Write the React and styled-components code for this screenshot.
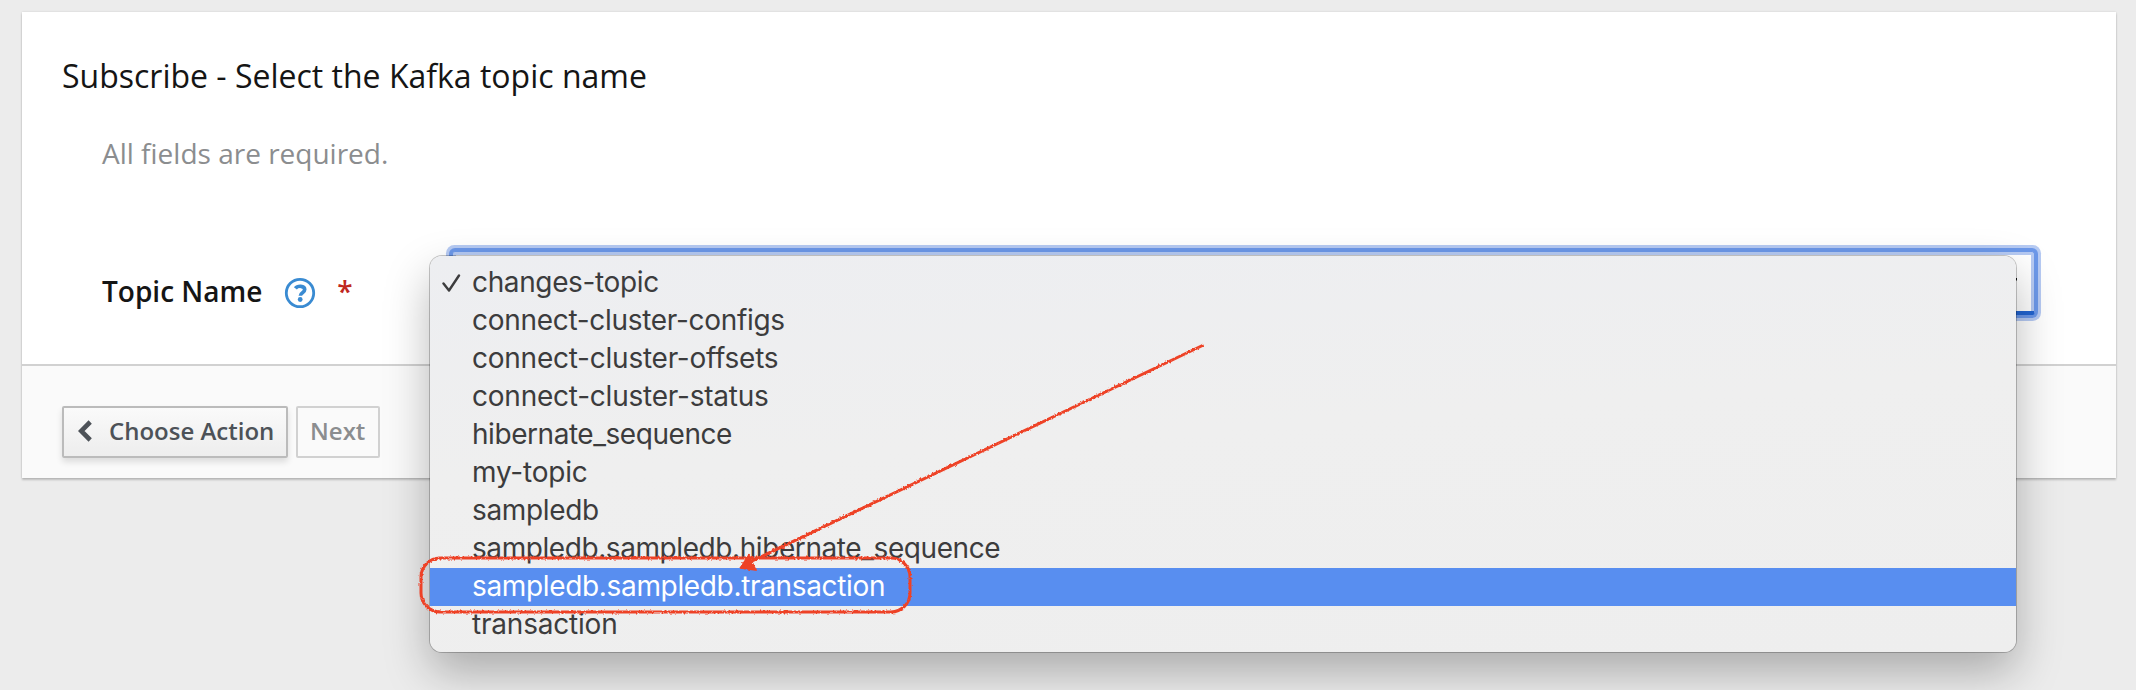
import React from "react";
import styled, { createGlobalStyle } from "styled-components";

const GlobalStyle = createGlobalStyle`
  * { box-sizing: border-box; }
  html, body { margin: 0; background: #ececec; }
  body { font-family: "Open Sans", "Noto Sans", sans-serif; color: #151515; overflow: hidden; }
`;

const Page = styled.main`
  position: relative;
  height: 690px;
  padding: 12px 20px 0 22px;
  overflow: hidden;
`;

const Card = styled.section`
  height: 466px;
  display: flex;
  flex-direction: column;
  background: #fff;
  box-shadow: 0 2px 2px rgba(3, 3, 3, 0.2), 0 0 2px rgba(3, 3, 3, 0.12);
`;

const CardBody = styled.div`
  height: 352px;
  padding: 39px 76px 0 40px;
`;

const Title = styled.h2`
  margin: 0;
  font-size: 32px;
  line-height: 50px;
  font-weight: 400;
  white-space: nowrap;
`;

const Hint = styled.p`
  margin: 29px 0 0 40px;
  font-size: 28px;
  line-height: 46px;
  color: #8b8d8f;
  white-space: nowrap;
`;

const Field = styled.div`
  display: flex;
  margin: 75px 0 0 40px;
`;

const FieldLabel = styled.label`
  display: flex;
  width: 350px;
  padding-top: 17px;
  font-size: 28px;
  line-height: 46px;
  font-weight: 600;
  white-space: nowrap;
`;

const HelpIcon = styled.svg`
  width: 32px;
  height: 32px;
  margin: 9px 0 0 22px;
`;

const Required = styled.span`
  margin-left: 21px;
  color: #c0281d;
`;

const Select = styled.div`
  display: flex;
  justify-content: flex-end;
  width: 1583px;
  height: 64px;
  padding: 26px 17px 0 0;
  border: 1px solid #6c98e9;
  border-bottom: 4px solid #2264d1;
  border-radius: 3px;
  background: #fff;
  box-shadow: inset 0 3px #b6caf3, inset 3px 0 #b6caf3, inset -3px 0 #b6caf3,
    0 0 0 3px #6c98e9, 0 0 0 6px #b6caf3;
`;

const CardFooter = styled.footer`
  flex: 1;
  display: flex;
  align-items: flex-start;
  gap: 8px;
  padding: 40px 40px 0;
  border-top: 2px solid #d1d1d1;
  background: #fafafa;
`;

const Button = styled.button`
  display: flex;
  align-items: center;
  width: ${(p) => p.$width}px;
  height: 52px;
  padding: 0 0 2px ${(p) => (p.disabled ? 12 : 14)}px;
  border: 2px solid ${(p) => (p.disabled ? "#d1d1d1" : "#bbbbbb")};
  border-radius: 2px;
  background: ${(p) => (p.disabled ? "#fafafa" : "linear-gradient(#fafafa, #ededed)")};
  box-shadow: ${(p) => (p.disabled ? "none" : "0 4px 6px rgba(3, 3, 3, 0.12)")};
  color: ${(p) => (p.disabled ? "#8b8d8f" : "#4d5258")};
  font: 600 24px/40px "Open Sans", "Noto Sans", sans-serif;
  white-space: nowrap;
`;

const ChevronIcon = styled.svg`
  width: 14px;
  height: 22px;
  margin-right: 17px;
`;

const Menu = styled.ul`
  position: absolute;
  left: 430px;
  top: 256px;
  width: 1586px;
  height: 396px;
  margin: 0;
  padding: 8px 0;
  list-style: none;
  border-radius: 12px;
  background: linear-gradient(176deg, #edeef1, #efefef 45%, #eeeeee);
  box-shadow: 0 0 0 1px rgba(0, 0, 0, 0.22), 0 20px 46px rgba(0, 0, 0, 0.28);
`;

const Option = styled.li`
  display: flex;
  align-items: center;
  height: 38px;
  padding-left: 12px;
  background: ${(p) => (p.$active ? "#588ef0" : "transparent")};
  color: ${(p) => (p.$active ? "#fff" : "#3c3c3d")};
  font: 400 28px/36px Inter, "Liberation Sans", sans-serif;
  white-space: nowrap;
`;

const OptionText = styled.span`
  height: 38px;
  letter-spacing: ${(p) => p.$tracking}px;
`;

const CheckSlot = styled.span`
  width: 30px;
  height: 38px;
`;

const Annotation = styled.svg`
  position: absolute;
  left: 0;
  top: 0;
  width: 2136px;
  height: 690px;
  pointer-events: none;
`;

const topics = [
  { name: "changes-topic", tracking: -0.37 },
  { name: "connect-cluster-configs", tracking: -0.3 },
  { name: "connect-cluster-offsets", tracking: -0.24 },
  { name: "connect-cluster-status", tracking: -0.23 },
  { name: "hibernate_sequence", tracking: -0.45 },
  { name: "my-topic", tracking: -0.2 },
  { name: "sampledb", tracking: -0.34 },
  { name: "sampledb.sampledb.hibernate_sequence", tracking: -0.42 },
  { name: "sampledb.sampledb.transaction", tracking: -0.34 },
  { name: "transaction", tracking: -0.2 },
];

export default function App() {
  return (
    <Page>
      <GlobalStyle />
      <Card>
        <CardBody>
          <Title>Subscribe - Select the Kafka topic name</Title>
          <Hint>All fields are required.</Hint>
          <Field>
            <FieldLabel>
              Topic Name
              <HelpIcon viewBox="0 0 32 32" fill="none" stroke="#3a8bd2">
                <circle cx="16" cy="16" r="13.7" strokeWidth="2.8" />
                <path d="M11.4 11.3C13.4 8.6 20.7 8.2 20.7 12.6C20.7 15.9 16.4 15.6 16.4 18.8" strokeWidth="3.7" />
                <circle cx="16.2" cy="22.5" r="2.4" fill="#3a8bd2" stroke="none" />
              </HelpIcon>
              <Required>*</Required>
            </FieldLabel>
            <Select>
              <svg width="12" height="8" viewBox="0 0 12 8" fill="#151515">
                <path d="M0 0H12V2L6 8L0 2Z" />
              </svg>
            </Select>
          </Field>
        </CardBody>
        <CardFooter>
          <Button $width={226}>
            <ChevronIcon viewBox="0 0 14 22" fill="none" stroke="#4d5258" strokeWidth="4.6">
              <path d="M12.2 2L3.2 11L12.2 20" />
            </ChevronIcon>
            Choose Action
          </Button>
          <Button $width={84} disabled>Next</Button>
        </CardFooter>
      </Card>
      <Menu>
        {topics.map((t, i) => (
          <Option key={t.name} $active={i === 8}>
            <CheckSlot>
              {i === 0 && (
                <svg width="20" height="38" viewBox="0 0 20 38" fill="none" stroke="#3c3c3d" strokeWidth="2.4" strokeLinecap="round" strokeLinejoin="round">
                  <path d="M1.5 19.5L7 26.5L17 11.5" />
                </svg>
              )}
            </CheckSlot>
            <OptionText $tracking={t.tracking}>{t.name}</OptionText>
          </Option>
        ))}
      </Menu>
      <Annotation viewBox="0 0 2136 690" fill="none" stroke="#ee4328" strokeWidth="3">
        <defs>
          <filter id="rough" filterUnits="userSpaceOnUse" x="400" y="320" width="840" height="310">
            <feTurbulence type="fractalNoise" baseFrequency="0.5" numOctaves="1" seed="4" />
            <feDisplacementMap in="SourceGraphic" scale="3" xChannelSelector="R" yChannelSelector="G" />
          </filter>
        </defs>
        <g filter="url(#rough)">
          <rect x="421" y="558" width="489" height="54" rx="19" />
          <path d="M1203.5 345L750 562" />
          <path d="M739 568.5L749 553.5L757 571Z" fill="#ee4328" stroke="none" />
        </g>
      </Annotation>
    </Page>
  );
}
